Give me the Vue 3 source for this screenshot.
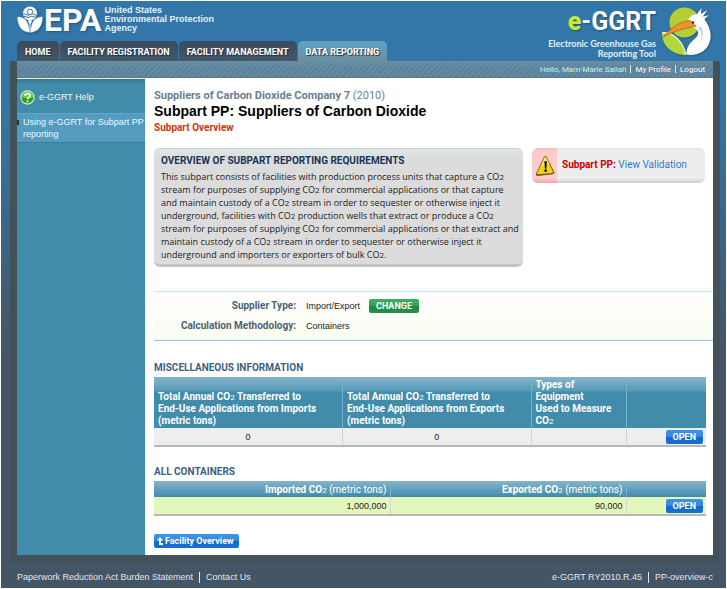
<script setup>
const tabs = [
  { label: 'HOME', active: false },
  { label: 'FACILITY REGISTRATION', active: false },
  { label: 'FACILITY MANAGEMENT', active: false },
  { label: 'DATA REPORTING', active: true },
]
</script>

<template>
  <div class="page">
    <header class="banner">
      <a class="epa" href="#">
        <svg class="epa-mark" viewBox="0 0 78 80" aria-hidden="true">
          <circle cx="39" cy="22" r="21" fill="#fff" />
          <path d="M14 25 Q20 20 27 25 T39 25 T51 25 T64 25" fill="none" stroke="#3377aa" stroke-width="3" />
          <path d="M14 32 Q20 28 27 32 T39 32 T51 32 T64 32" fill="none" stroke="#3377aa" stroke-width="3" />
          <circle cx="39" cy="17" r="8" fill="#fff" stroke="#3377aa" stroke-width="3" />
          <path d="M0 31 C26 31 37 48 38 79 C14 79 1 60 0 31Z M78 31 C52 31 41 48 40 79 C64 79 77 60 78 31Z" fill="#fff" stroke="#3377aa" stroke-width="2" />
          <path d="M39 36 L45 46 L39 56 L33 46Z" fill="#fff" />
          <path d="M39 50 V79" stroke="#fff" stroke-width="3" />
        </svg>
        <span class="epa-name">EPA</span>
        <span class="epa-full">United States<br>Environmental Protection<br>Agency</span>
      </a>
      <div class="ggrt">
        <div class="ggrt-text">
          <span class="ggrt-name"><b>e</b>-GGRT</span>
          <span class="ggrt-sub">Electronic Greenhouse Gas<br>Reporting Tool</span>
        </div>
        <svg class="bird" viewBox="0 0 156 160" aria-hidden="true">
          <circle cx="72" cy="60" r="46" fill="#b2cf36" />
          <path d="M3 92 C32 88 66 112 76 160 C34 158 3 132 3 92Z" fill="#b4d83c" />
          <path d="M3 92 C32 88 66 112 76 158" fill="none" stroke="#eef5d6" stroke-width="4" />
          <path d="M84 50 C92 34 118 28 130 46 C156 78 160 116 136 142 C120 158 98 162 78 158 C77 138 88 122 104 110 C116 100 118 86 104 78 L86 70Z" fill="#fff" />
          <path d="M108 38 L124 16 L122 34 L142 22 L128 42 L146 38 L128 54Z" fill="#fff" />
          <path d="M112 76 C126 90 128 106 114 126 C128 110 134 90 122 72Z" fill="#c3d6e3" />
          <path d="M6 105 C26 80 58 56 90 54 L108 72 C74 76 42 86 6 105Z" fill="#f0922b" stroke="#a65b1d" stroke-width="2" />
          <circle cx="98" cy="60" r="4" fill="#2b3338" />
        </svg>
      </div>
    </header>
    <nav class="tabs">
      <a v-for="t in tabs" :key="t.label" href="#" :class="['tab', { active: t.active }]">{{ t.label }}</a>
    </nav>

    <div class="frame">
      <div class="userbar">
        <span class="hello">Hello, Mam-Marie Sallah</span><i></i><a href="#">My Profile</a><i></i><a href="#">Logout</a>
      </div>
      <div class="body">
        <aside class="side">
          <a class="help" href="#">
            <svg class="help-icon" viewBox="0 0 42 42" aria-hidden="true">
              <circle cx="21" cy="21" r="20" fill="#e8f3e5" />
              <circle cx="21" cy="21" r="17" fill="#2f9e1e" />
              <path d="M5 20 A16 16 0 0 1 37 20 Q21 26 5 20Z" fill="#6ccb4f" />
              <path d="M14 16 C14 8 28 8 28 16 C28 21 21 20 21 26" fill="none" stroke="#fff" stroke-width="4.5" />
              <circle cx="21" cy="32" r="2.8" fill="#fff" />
            </svg>
            e-GGRT Help
          </a>
          <a class="topic" href="#">Using e-GGRT for Subpart PP<br>reporting</a>
        </aside>

        <main class="main">
          <p class="company"><b>Suppliers of Carbon Dioxide Company 7</b> (2010)</p>
          <h1>Subpart PP: Suppliers of Carbon Dioxide</h1>
          <p class="crumb">Subpart Overview</p>

          <div class="top">
            <section class="overview">
              <h2>OVERVIEW OF SUBPART REPORTING REQUIREMENTS</h2>
              <p>
                This subpart consists of facilities with production process units that capture a CO<small>2</small><br>
                stream for purposes of supplying CO<small>2</small> for commercial applications or that capture<br>
                and maintain custody of a CO<small>2</small> stream in order to sequester or otherwise inject it<br>
                underground, facilities with CO<small>2</small> production wells that extract or produce a CO<small>2</small><br>
                stream for purposes of supplying CO<small>2</small> for commercial applications or that extract and<br>
                maintain custody of a CO<small>2</small> stream in order to sequester or otherwise inject it<br>
                underground and importers or exporters of bulk CO<small>2</small>.
              </p>
            </section>
            <section class="validation">
              <span class="warn">
                <svg viewBox="0 0 60 66" aria-hidden="true">
                  <path d="M28 4 Q32 1 35 6 L58 52 Q59 57 53 58 L8 63 Q1 62 3 56Z" fill="#6e5a18" />
                  <path d="M29 7 Q32 5 34 9 L54 50 Q55 53 51 54 L9 58 Q5 58 7 53Z" fill="#f7cf12" />
                  <path d="M29 7 Q32 5 34 9 L43 28 L18 34Z" fill="#fbe568" />
                  <path d="M28 19 H36 L34 41 H30Z" fill="#111" />
                  <circle cx="32" cy="47" r="4" fill="#111" />
                </svg>
              </span>
              <p><b>Subpart PP:</b> <a href="#">View Validation</a></p>
            </section>
          </div>

          <dl class="info">
            <dt>Supplier Type:</dt>
            <dd>Import/Export <button type="button" class="btn green">CHANGE</button></dd>
            <dt>Calculation Methodology:</dt>
            <dd>Containers</dd>
          </dl>

          <h3 id="misc">MISCELLANEOUS INFORMATION</h3>
          <table class="grid misc" aria-labelledby="misc">
            <colgroup><col><col><col class="equipment"><col class="actions"></colgroup>
            <thead>
              <tr>
                <th>Total Annual CO<small>2</small> Transferred to<br>End-Use Applications from Imports<br>(metric tons)</th>
                <th>Total Annual CO<small>2</small> Transferred to<br>End-Use Applications from Exports<br>(metric tons)</th>
                <th>Types of<br>Equipment<br>Used to Measure<br>CO<small>2</small></th>
                <th></th>
              </tr>
            </thead>
            <tbody>
              <tr><td>0</td><td>0</td><td></td><td class="act"><button type="button" class="btn">OPEN</button></td></tr>
            </tbody>
          </table>

          <h3 id="containers">ALL CONTAINERS</h3>
          <table class="grid containers" aria-labelledby="containers">
            <colgroup><col><col><col class="actions"></colgroup>
            <thead>
              <tr>
                <th>Imported CO<small>2</small> <span>(metric tons)</span></th>
                <th>Exported CO<small>2</small> <span>(metric tons)</span></th>
                <th></th>
              </tr>
            </thead>
            <tbody>
              <tr><td>1,000,000</td><td>90,000</td><td class="act"><button type="button" class="btn">OPEN</button></td></tr>
            </tbody>
          </table>

          <button type="button" class="btn back">
            <svg viewBox="0 0 6 8" aria-hidden="true"><path d="M3 0 L6 3.5 H4 V6 H6 V8 H2 V3.5 H0Z" fill="#fff" /></svg>Facility Overview
          </button>
        </main>
      </div>
    </div>

    <footer class="foot">
      <div><a href="#">Paperwork Reduction Act Burden Statement</a><i></i><a href="#">Contact Us</a></div>
      <div class="build">e-GGRT RY2010.R.45<i></i>PP-overview-c</div>
    </footer>
  </div>
</template>

<style>
body { background: #fff; }
</style>

<style scoped>
* { box-sizing: border-box; }
.page {
  margin: 1px;
  min-height: calc(100vh - 2px);
  font-family: "Liberation Sans", Arial, sans-serif;
  font-size: 10px;
  color: #222;
  white-space: nowrap;
  overflow: hidden;
  background: linear-gradient(#3377aa 0, #3377aa 90px, #445566 350px);
}
a { color: inherit; text-decoration: none; }
p, h1, h2, h3, dl, dd { margin: 0; }
small { font-size: 8px; line-height: 1; }

.banner { display: flex; justify-content: space-between; height: 40px; padding: 0 14px 0 16px; }
.epa { display: flex; align-items: flex-start; color: #fff; }
.epa-mark { width: 26px; height: 27px; margin-top: 5px; filter: drop-shadow(1px 1px 1px #245a85); }
.epa-name { margin: 1px 0 0 1px; font: bold 32px/36px Roboto, sans-serif; text-shadow: 1px 1px 2px #1f5580; }
.epa-full { margin: 5px 0 0 3px; font: bold 9px/9px "Liberation Sans", sans-serif; color: #e4f0f6; }
.ggrt { display: flex; gap: 5px; height: 58px; }
.ggrt-text { display: flex; flex-direction: column; align-items: flex-end; color: #fff; padding-top: 4px; }
.ggrt-name { font: bold 25px/34px Roboto, sans-serif; text-shadow: 1px 1px 2px #1f4a70; }
.ggrt-name b { color: #c5e63c; }
.ggrt-sub { font: bold 9px/10px Lato, sans-serif; text-align: right; color: #e4f0f6; }
.bird { width: 51px; height: 56px; filter: drop-shadow(1px 1px 1px #245a85); }

.tabs { display: flex; gap: 1px; padding-left: 16px; }
.tab {
  height: 20px; padding: 0 8px; border-radius: 5px 5px 0 0;
  font: bold 9px/22px Roboto, sans-serif;
  color: #fff; background: linear-gradient(#394a5c, #44586b); text-shadow: 1px 1px 1px #1f2f3f;
}
.tab.active { background: linear-gradient(#5fa3c5, #6b8f9f); }

.frame { margin: 0 6px 0 9px; padding: 0 7px 7px; background: #435158; }
.userbar {
  display: flex; justify-content: flex-end; align-items: center; height: 17px; padding-right: 8px;
  font: 8px/17px Roboto, sans-serif; color: #fff;
  background: linear-gradient(#6b8f9f, transparent 40%), repeating-linear-gradient(135deg, #5782a0 0 2px, #668ba0 2px 4px);
  border-bottom: 1px solid #5b7886;
}
.hello { color: #ccf0e4; }
.userbar i, .foot i { width: 1px; height: 8px; margin: 0 4px; background: #e0e8ec; }
.body { display: flex; background: #fff; }
.side {
  width: 129px; flex: none; border: solid #edf5c8; border-width: 1px 1px 0 0;
  background: linear-gradient(#34728f, transparent 5px), #418bab;
  font-size: 9px; line-height: 12px; color: #f0f8fb;
}
.help { display: flex; align-items: center; gap: 4px; height: 34px; padding: 2px 0 0 3px; }
.help-icon { width: 15px; height: 15px; }
.topic {
  display: block; padding: 2px 0 3px 6px; height: 30px;
  background: linear-gradient(to right, #20333d 2px, transparent 2px) 0 6px / 100% 5px no-repeat, #539cbf;
  border-top: 1px solid #62a8c8; border-bottom: 1px solid #3a7c9b;
}

.main { flex: 1; min-width: 0; padding: 10px 0 7px 8px; }
.company { font: 11px/15px Roboto, sans-serif; color: #6b7f92; }
h1 { font-size: 14px; line-height: 17px; color: #000; }
.crumb { font: bold 10px/16px Roboto, sans-serif; color: #d2350c; }
.top { display: flex; align-items: flex-start; gap: 9px; padding: 12px 8px 0 0; }
.overview {
  flex: 1; min-width: 0; padding: 6px 0 3px 7px; border-radius: 6px; background: linear-gradient(#dfe6e7, #dcdcdc 10px);
  border-top: 1px solid #c8d2d3; border-bottom: 3px solid #c4c4c4;
}
.overview h2 { font: bold 10px/12px Roboto, sans-serif; color: #17355a; }
.overview p { padding-top: 3px; font: 9px/13px "Open Sans", sans-serif; color: #222; }
.validation {
  display: flex; flex: none; align-items: center; width: 173px; height: 35px; overflow: hidden; border-radius: 6px;
  background: linear-gradient(#e4e4e4, #ededed 3px, #ededed 30px, #cfcfcf);
}
.warn { display: flex; flex: none; align-items: center; justify-content: center; align-self: stretch; width: 25px; background: linear-gradient(#f5bdbd, #ffcaca 3px, #ffcaca 30px, #e9abab); }
.warn svg { width: 20px; height: 22px; }
.validation p { padding: 0 0 2px 5px; font: 10px/14px Roboto, sans-serif; }
.validation b { color: #c00; }
.validation a { color: #2a7bcb; }

.info {
  display: grid; grid-template-columns: 142px 1fr; column-gap: 10px; grid-auto-rows: 20px; align-items: center;
  margin: 24px 0 20px; padding: 4px 0; border-top: 1px solid #c5e5f1; border-bottom: 1px solid #93c3d9;
  background: linear-gradient(#fff, #fafdf0);
}
dt { text-align: right; font: bold 10px/16px Roboto, sans-serif; color: #4c5f74; }
dd { display: flex; align-items: center; gap: 9px; font: 9px/18px "Liberation Sans", sans-serif; color: #222; }

.btn {
  height: 14px; padding: 0 7px; border: 0; border-radius: 2px; color: #fff;
  font: bold 9px/14px Roboto, sans-serif; background: linear-gradient(#3f93e8, #3486de 50%, #1168cc 50%, #1a6fd2);
}
.btn.green { background: linear-gradient(#3fae61, #33a255 50%, #1e8840 50%, #25934a); }

h3 { font: bold 10px/14px Roboto, sans-serif; color: #3c5f85; }
.grid { width: calc(100% - 7px); margin: 2px 0 18px; border-collapse: collapse; table-layout: fixed; border-bottom: 2px solid #b8b8b8; }
.equipment { width: 95px; }
.actions { width: 80px; }
.grid th {
  padding: 2px 4px 1px; text-align: left; vertical-align: bottom; color: #fff; border-right: 1px solid #77b3cd;
  font: bold 10px/12px Roboto, sans-serif; background: linear-gradient(#86b4cb, #569ab8 14px, #418bab 15px);
}
.grid small, .grid th span { font-weight: normal; }
.grid td { height: 18px; padding: 0 4px; border-right: 1px solid #d4d4d4; background: #eee; font: 9px/14px "Liberation Sans", sans-serif; color: #222; text-align: center; }
.grid th:last-child, .grid td:last-child { border-right: 0; }
.grid td.act { text-align: right; padding-right: 3px; line-height: 0; }
.grid.containers th, .grid.containers td { text-align: right; }
.grid.containers th { height: 16px; padding-right: 3px; background: linear-gradient(#86b4cb, #418bab); }
.grid.containers td { padding-right: 3px; background: #e2f7bb; }
.back { display: flex; align-items: center; gap: 2px; padding: 0 5px 0 3px; }
.back svg { width: 6px; height: 8px; }

.foot { display: flex; justify-content: space-between; padding: 9px 13px 5px 16px; font-size: 9px; line-height: 12px; color: #e2e8ec; }
.foot div { display: flex; align-items: center; }
.foot i { height: 11px; margin: 0 6px; }
</style>
